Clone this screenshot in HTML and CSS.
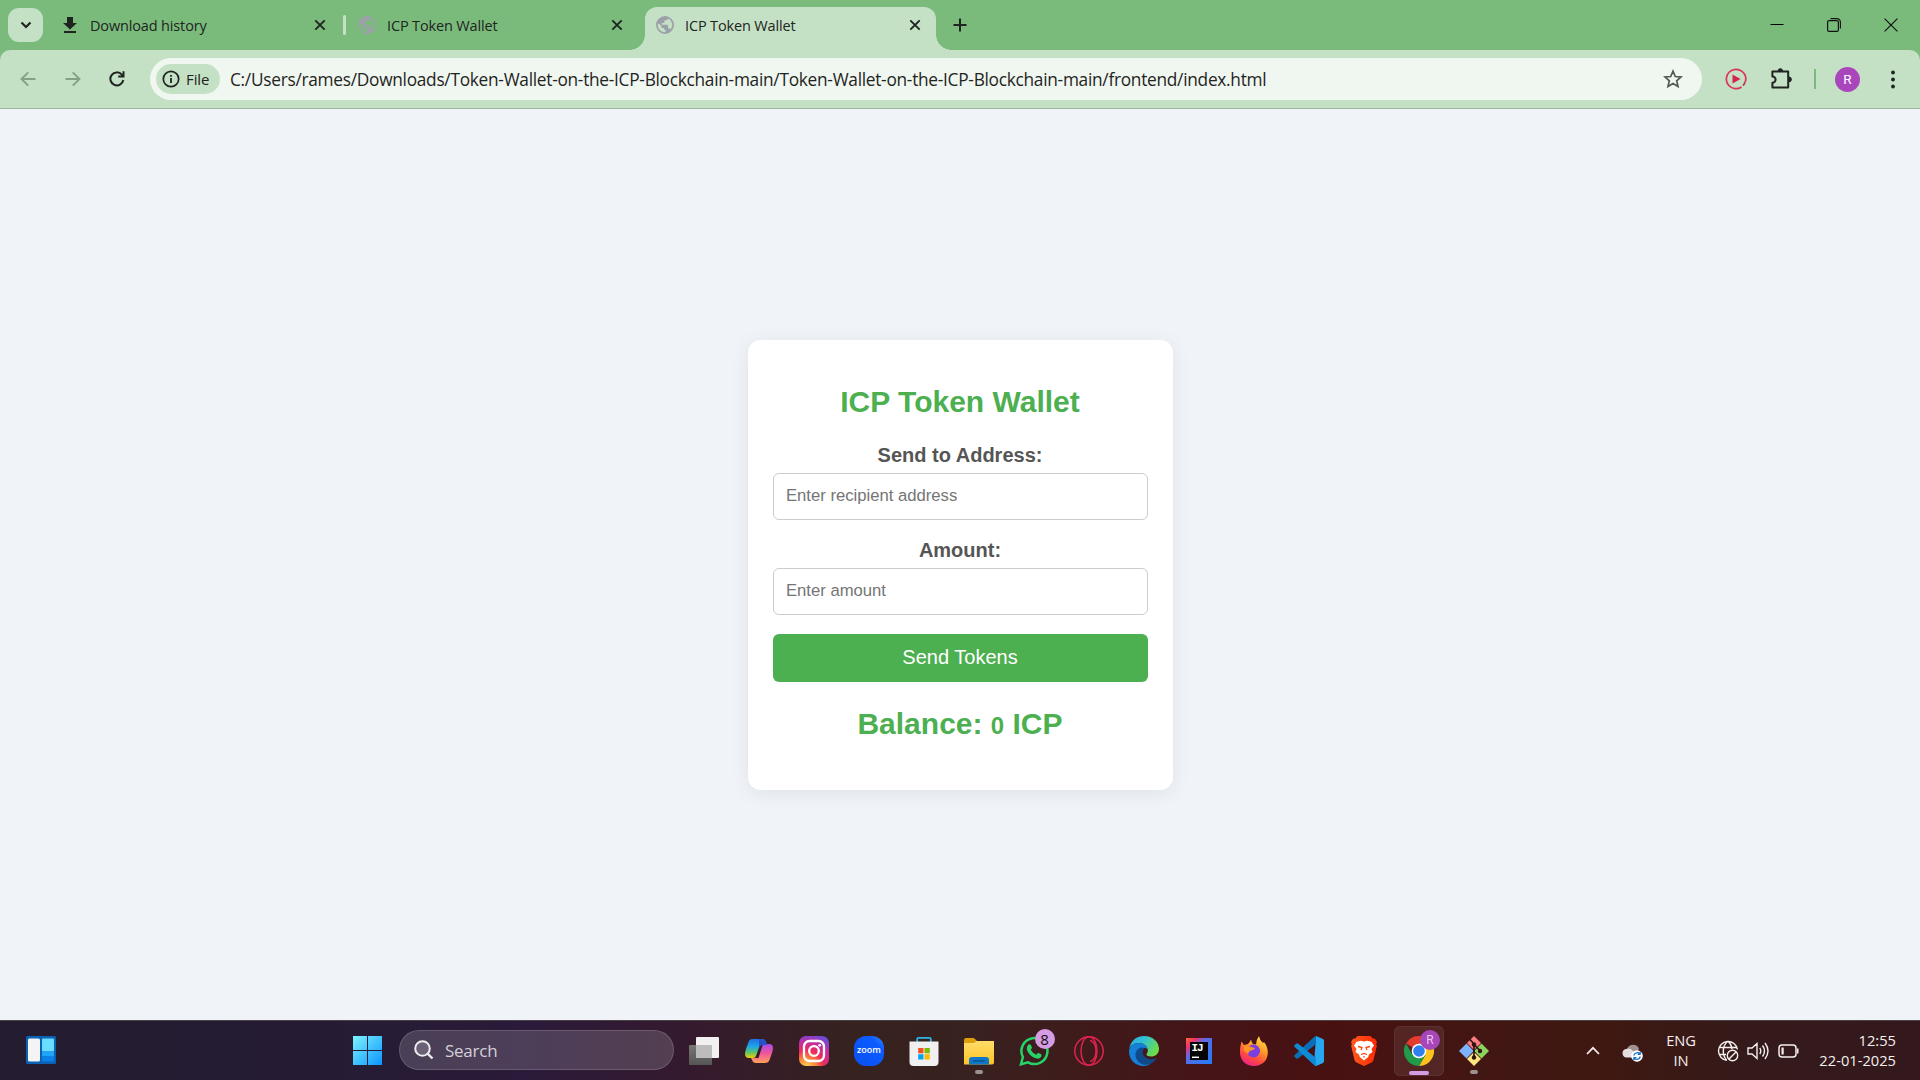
FILE: index.html
```html
<!DOCTYPE html>
<html lang="en">
<head>
<meta charset="utf-8">
<title>ICP Token Wallet</title>
<link rel="stylesheet" href="styles.css">
</head>
<body>
<svg class="defs" aria-hidden="true">
  <defs>
    <symbol id="close" viewBox="0 0 12 12"><path d="M1.3 1.3 10.7 10.7M10.7 1.3 1.3 10.7" fill="none" stroke="#1f2421" stroke-width="1.900"/></symbol>
    <symbol id="globe" viewBox="0 0 20 20"><path d="M10 1a9 9 0 1 0 0 18 9 9 0 0 0 0-18zM8.8 17.2A7.3 7.3 0 0 1 2.9 8.400L6.400 10.400v1q0 1.500 1.500 1.500h1v1.500h1.600v2.800zM15.600 14.600q-.5-1.300-1.800-1.300h-.8v-2.600q0-.9-.9-.9H6.800V8h1.800q.9 0 .9-.9V5.300h1.800q1.700 0 1.700-1.700v-.3A7.300 7.300 0 0 1 15.600 14.600z" fill="#9ba0a9" fill-rule="evenodd"/></symbol>
    <linearGradient id="gWin" x1="0" y1="0" x2="1" y2="1"><stop offset="0" stop-color="#7df4ff"/><stop offset="1" stop-color="#0a94ff"/></linearGradient>
    <linearGradient id="gGray" x1="0" y1="0" x2="0" y2="1"><stop offset="0" stop-color="#777"/><stop offset="1" stop-color="#555"/></linearGradient>
    <linearGradient id="gCopL" x1="0" y1="0" x2="0" y2="1"><stop offset="0" stop-color="#1f6fe0"/><stop offset=".4" stop-color="#1fa6e6"/><stop offset=".7" stop-color="#5cc46a"/><stop offset="1" stop-color="#f0d000"/></linearGradient>
    <linearGradient id="gCopR" x1="0" y1="0" x2="0" y2="1"><stop offset="0" stop-color="#a94bea"/><stop offset=".5" stop-color="#f0569a"/><stop offset="1" stop-color="#ffa05a"/></linearGradient>
    <radialGradient id="gInsta" cx=".25" cy="1.05" r="1.15"><stop offset="0" stop-color="#ffd75e"/><stop offset=".25" stop-color="#fb9238"/><stop offset=".5" stop-color="#ee2a5b"/><stop offset=".75" stop-color="#c22fa4"/><stop offset="1" stop-color="#6a4bd8"/></radialGradient>
    <linearGradient id="gFold" x1="0" y1="0" x2="0" y2="1"><stop offset="0" stop-color="#ffdc6b"/><stop offset="1" stop-color="#ffc425"/></linearGradient>
    <linearGradient id="gEdge" x1="0" y1="0" x2="1" y2=".5"><stop offset="0" stop-color="#2aa7e0"/><stop offset=".5" stop-color="#33c3d0"/><stop offset="1" stop-color="#6bdc4a"/></linearGradient>
    <linearGradient id="gIj" x1="0" y1="0" x2="1" y2="1"><stop offset="0" stop-color="#ff6a2a"/><stop offset=".2" stop-color="#f0326e"/><stop offset=".4" stop-color="#5a6be8"/><stop offset="1" stop-color="#1f7cf5"/></linearGradient>
    <linearGradient id="gFox" x1=".8" y1="0" x2=".3" y2="1"><stop offset="0" stop-color="#ffe34d"/><stop offset=".4" stop-color="#ff9a28"/><stop offset=".75" stop-color="#ff4545"/><stop offset="1" stop-color="#e8238a"/></linearGradient>
    <linearGradient id="gBrave" x1="0" y1="0" x2="1" y2="0"><stop offset="0" stop-color="#ff5a1f"/><stop offset="1" stop-color="#ff2800"/></linearGradient>
  </defs>
</svg>

<header class="tabstrip">
  <button class="tab-search"><svg width="12" height="8" viewBox="0 0 12 8"><path d="M1.500 1.500 6 6 10.500 1.500" fill="none" stroke="#1f2421" stroke-width="2.200"/></svg></button>
  <div class="tab tab-first">
    <svg class="fav" viewBox="0 0 20 20"><path d="M7 2h6v6h4l-7 6.500L3 8h4zM4 16h12v2H4z" fill="#1f2421"/></svg>
    <span class="tab-title">Download history</span>
    <svg class="x"><use href="#close"/></svg>
  </div>
  <i class="tab-sep"></i>
  <div class="tab tab-mid">
    <svg class="fav"><use href="#globe"/></svg>
    <span class="tab-title">ICP Token Wallet</span>
    <svg class="x"><use href="#close"/></svg>
  </div>
  <div class="tab tab-active">
    <svg class="fav"><use href="#globe"/></svg>
    <span class="tab-title">ICP Token Wallet</span>
    <svg class="x"><use href="#close"/></svg>
  </div>
  <svg class="plus" viewBox="0 0 14 14"><path d="M7 .5v13M.5 7h13" stroke="#1f2421" stroke-width="2"/></svg>
  <div class="win-controls">
    <svg width="14" height="14" viewBox="0 0 14 14"><path d="M.5 6.500h13" stroke="#000" stroke-width="1"/></svg>
    <svg width="14" height="14" viewBox="0 0 14 14"><path d="M3.500.6H10a3.400 3.400 0 0 1 3.400 3.400v6.500" fill="none" stroke="#111" stroke-width="1.100"/><rect x=".6" y="2.600" width="10.800" height="10.800" rx="1.500" fill="none" stroke="#111" stroke-width="1.200"/></svg>
    <svg width="14" height="14" viewBox="0 0 14 14"><path d="M.6.6 13.400 13.400M13.400.6.6 13.400" stroke="#111" stroke-width="1.200"/></svg>
  </div>
</header>

<div class="toolbar">
  <svg class="nav back" viewBox="0 0 16 16"><path d="M15.500 8H1.500M8.200 1.300 1.500 8l6.700 6.700" fill="none" stroke="#84a086" stroke-width="1.900"/></svg>
  <svg class="nav fwd" viewBox="0 0 16 16"><path d="M.5 8h14M7.800 1.300 14.500 8l-6.700 6.700" fill="none" stroke="#84a086" stroke-width="1.900"/></svg>
  <svg class="nav reload" viewBox="0 0 16 16"><path d="M14.300 9A6.500 6.500 0 1 1 12.800 3.600L14.500 5.600" fill="none" stroke="#1f2421" stroke-width="2"/><path d="M15.500.2v6.300H9.200V4.600h4.300V.2z" fill="#1f2421"/></svg>
  <div class="omnibox">
    <div class="chip">
      <svg width="18" height="18" viewBox="0 0 18 18"><circle cx="9" cy="9" r="7.700" fill="none" stroke="#1f2421" stroke-width="1.700"/><path d="M9 8v5M9 5v1.800" stroke="#1f2421" stroke-width="1.800"/></svg>
      <span class="chip-text">File</span>
    </div>
    <span class="url">C:/Users/rames/Downloads/Token-Wallet-on-the-ICP-Blockchain-main/Token-Wallet-on-the-ICP-Blockchain-main/frontend/index.html</span>
    <svg class="star" viewBox="0 0 20 20"><path d="m10 2.200 2.300 5.300 5.700.5-4.300 3.800 1.300 5.600-5-3-5 3 1.300-5.600L2 8l5.700-.5z" fill="none" stroke="#4f5a51" stroke-width="1.700"/></svg>
  </div>
  <svg class="ext-play" viewBox="0 0 22 22"><path d="M20 14.500A9.700 9.700 0 0 0 17 3.400 9.700 9.700 0 1 0 16.500 19" fill="none" stroke="#dc3558" stroke-width="1.700"/><path d="M18.200 17.600 20 14.500" stroke="#b02a48" stroke-width="1.600"/><path d="M7.500 6.500v9L15.500 11z" fill="#d32450"/></svg>
  <svg class="ext" viewBox="0 0 22 22"><path d="M2.400 3.600H18.200V19.600H2.400V14.800a3.200 3.200 0 0 0 0-6.400z" fill="none" stroke="#1f2421" stroke-width="2" stroke-linejoin="round"/><path d="M8 3a2.300 2.300 0 0 1 4.600 0zM19 9a2.400 2.400 0 0 1 0 4.800z" fill="#1f2421" stroke="#1f2421"/></svg>
  <i class="tool-sep"></i>
  <span class="avatar">R</span>
  <svg class="menu" viewBox="0 0 4 20"><g fill="#1f2421"><circle cx="2" cy="3.500" r="1.900"/><circle cx="2" cy="10.500" r="1.900"/><circle cx="2" cy="17.500" r="1.900"/></g></svg>
</div>

<main class="page">
  <section class="wallet">
    <h1>ICP Token Wallet</h1>
    <label for="address">Send to Address:</label>
    <input id="address" type="text" placeholder="Enter recipient address">
    <label for="amount">Amount:</label>
    <input id="amount" type="text" placeholder="Enter amount">
    <button class="send">Send Tokens</button>
    <h2>Balance: <span class="balance">0</span> ICP</h2>
  </section>
</main>

<footer class="taskbar">
  <svg class="widgets" viewBox="0 0 30 28"><rect width="30" height="28" rx="1.500" fill="#0b62b4"/><rect x="2" y="2.500" width="12" height="23" rx="1.500" fill="#f4f4f4"/><rect x="16" y="2.500" width="12" height="13" rx="1" fill="#6adcff"/><path d="M16 15.500h12v5H16z" fill="#1fa4f8"/><path d="M16 20.500h12v4a1 1 0 0 1-1 1H17a1 1 0 0 1-1-1z" fill="#0a80ea"/></svg>

  <div class="slot start"><svg width="29" height="29" viewBox="0 0 29 29"><path d="M0 0h14v14H0zM15 0h14v14H15zM0 15h14v14H0zM15 15h14v14H15z" fill="url(#gWin)"/></svg></div>
  <div class="search"><svg width="20" height="20" viewBox="0 0 20 20"><circle cx="8.500" cy="8.500" r="7.300" fill="#6c6077" stroke="#eee" stroke-width="2"/><path d="m13.500 13.500 5 5" stroke="#eee" stroke-width="2.400"/></svg><span>Search</span></div>

  <div class="slot"><svg width="30" height="30" viewBox="0 0 30 30"><rect y="9" width="23" height="20" rx="1" fill="url(#gGray)"/><rect x="7" y="1" width="23" height="21" rx="1" fill="#f0f0f0"/><path d="M7 9h15q1 0 1 1v12H8q-1 0-1-1z" fill="#bcbcbc"/></svg></div>
  <div class="slot"><svg width="30" height="30" viewBox="0 0 30 30"><path d="M8 3h10q3 0 4 3l1 3h-4q-3 0-4 3l-2.500 7q-1 3-4 3H5q-4 0-4-4 0-2 1-5l2.500-7Q5.500 3 8 3z" fill="url(#gCopL)"/><path d="M21 8h4q4 0 4 4 0 2-1 5l-2.500 7q-1 3-4.500 3h-9q-3 0-4-3l-1-2h3q3 0 4-3l2.500-7Q17.500 8 21 8z" fill="url(#gCopR)"/><path d="m16.500 8-5 14h3l4.500-14z" fill="#351c2c"/><path d="M15 3h3q3 0 4 3l1 3h-4q-3 0-4 3z" fill="#2653c7"/></svg></div>
  <div class="slot"><svg width="30" height="30" viewBox="0 0 30 30"><rect width="30" height="30" rx="7" fill="url(#gInsta)"/><g fill="none" stroke="#fff" stroke-width="2.300"><rect x="5" y="5" width="20" height="20" rx="5.500"/><circle cx="15" cy="15" r="4.800"/></g><circle cx="20.700" cy="9.300" r="1.400" fill="#fff"/></svg></div>
  <div class="slot"><span class="zoom-icon">zoom</span></div>
  <div class="slot"><svg width="30" height="30" viewBox="0 0 30 30"><path d="M8.200 6.500V3q0-1.200 1.200-1.200h11.200q1.200 0 1.200 1.200v3.500" fill="none" stroke="#2cb5e6" stroke-width="1.800"/><path d="M.5 5.500h29V26q0 4-4 4h-21q-4 0-4-4z" fill="#f0f0f0"/><path d="M9.200 12h5.300v5.300H9.200z" fill="#f25022"/><path d="M15.500 12h5.300v5.300h-5.300z" fill="#7fba00"/><path d="M9.200 18.200h5.300v5.300H9.200z" fill="#00a4ef"/><path d="M15.500 18.200h5.300v5.300h-5.300z" fill="#ffb900"/></svg></div>
  <div class="slot"><svg width="30" height="30" viewBox="0 0 30 30"><path d="M0 4q0-2 2-2h7q1 0 2 1l2 2v5H0z" fill="#dd9f0b"/><path d="M0 7h9q1 0 2-.7L12.500 5H30v21.500q0 2-2 2H0z" fill="url(#gFold)"/><path d="M5 28.500V24q0-3 3-3h14q3 0 3 3v4.500z" fill="#0f78c8"/><path d="M9 25h12" stroke="#0a4d8c" stroke-width="1.300"/></svg><i class="dot"></i></div>
  <div class="slot"><svg width="30" height="30" viewBox="0 0 30 30"><path d="M2 28.300 3.900 21A13 13 0 1 1 9 26.300z" fill="none" stroke="#25d366" stroke-width="2.500"/><path d="M9.500 8.500q1.700-1 2.500.8l.9 2q.3.900-1.200 2.500 1.900 3.600 5.500 4.900 1.500-2.100 2.300-1.700l2.600 1.300q1 .6.200 2.200-1.400 2.600-4.300 2.100-6.200-1.200-9.700-7.700-1.400-3.800 1.200-6.400z" fill="#25d366"/></svg><span class="badge">8</span></div>
  <div class="slot"><svg width="30" height="30" viewBox="0 0 30 30"><g fill="none" stroke="#e0224e" stroke-width="1.500"><circle cx="15" cy="15" r="14.200"/><ellipse cx="15" cy="15" rx="8" ry="14.200"/><path d="M16 4.500c8 1 8 20 0 21"/></g></svg></div>
  <div class="slot"><svg width="30" height="30" viewBox="0 0 30 30"><path d="M0 14.500C1 5 7 0 15 0c9 0 15 6 15 13 0 5-4 7.500-8 7.500-3 0-4.500-1-4.500-2s1.300-1.600 1.300-4C18.800 10.500 15 7 9.500 7 4 7 0 11 0 14.500z" fill="url(#gEdge)"/><path d="M0 15C.5 10 4.500 7 9.500 7c5 0 8.500 3 9 6.300-1-1-2-1.300-3-1.300-3 0-4.500 3-4.500 6 0 6 5 10.500 11 9.500-2.200 1.700-5 2.500-7.500 2.500C6 30 0 23.500 0 15z" fill="#1580d8"/><path d="M12 11.500c-5 1.500-7 7-4.500 11.500C10 28 16 30 21 28c3-1.200 6-4 6.700-6-3 1.500-6.700 1.700-9.700.3C13.500 20 12.500 16 15.500 12q-1.500-.8-3.500-.5z" fill="#114a8b"/></svg></div>
  <div class="slot"><svg width="26" height="26" viewBox="0 0 26 26"><path d="M0 0h26v26H0z" fill="url(#gIj)"/><path d="M4 4h18v18H4z" fill="#050505"/><path d="M6 19.300h7" stroke="#fff" stroke-width="1.500"/><text class="ij" x="5.400" y="13">IJ</text></svg></div>
  <div class="slot"><svg width="30" height="30" viewBox="0 0 30 30"><path d="M2.500 5.500 5 9l4-1q2-2 3-4.500Q12.500 6 14 8l3 .5Q17 4 20 0q.5 4 4 7l1-1q4 5 3.800 11C28.500 25 22.500 30 15 30 6.500 30 .5 24 1 15 1 11 2 8 2.500 5.500z" fill="url(#gFox)"/><circle cx="14.500" cy="15" r="6.500" fill="#7b3fe0"/><path d="M5 10q4-1 7 1l4 1q-1 2-4 2.500-3 1-2.500 3.500L5 15z" fill="#ff9422"/></svg></div>
  <div class="slot"><svg width="30" height="30" viewBox="0 0 30 30"><path d="m22 0 7 3q1 .5 1 2v20q0 1.500-1 2l-7 3-2-1z" fill="#27a6f2"/><path d="M22 0v8L4 22.500q-.7.500-1.500 0L.5 20.800q-.9-.8 0-1.600L20 1z" fill="#0b6fb8"/><path d="M22 30v-8L4 7.500q-.7-.5-1.500 0L.5 9.200q-.9.800 0 1.600L20 29z" fill="#118ad6"/></svg></div>
  <div class="slot"><svg width="30" height="30" viewBox="0 0 30 30"><path d="M8.500 0h13L24 2.800l1.800-.3L28 6l-.8 2 .6 2-3.300 14q-.5 1.500-2 2.500L15 30l-7.500-3.500q-1.500-1-2-2.500L2.200 10l.6-2L2 6l2.200-3.500 1.800.3z" fill="url(#gBrave)"/><path d="m15 5.500 3-.7 4.500 1L25 9.500 22.500 13l1 3-3.500 2.500-.8 2.500L15 24.500 10.800 21l-.8-2.500L6.500 16l1-3L5 9.500l2.500-3.700 4.500-1z" fill="#fff"/><path d="m9 10.500 4 1-1 2.500M21 10.500l-4 1 1 2.500M12 18.500l3-1 3 1M15 20v1.500" fill="none" stroke="#ff4410" stroke-width="1.300"/></svg></div>
  <div class="slot"><div class="active-app"><svg width="30" height="30" viewBox="0 0 30 30"><path d="M15 15 2 7.500A15 15 0 0 1 28 7.500H15z" fill="#e33b2e"/><path d="M15 15V7.500h13A15 15 0 0 1 15 30l6.500-11.200z" fill="#fcc31e"/><path d="M15 15l6.500 3.800L15 30A15 15 0 0 1 2 7.500l6.500 11.300z" fill="#229a4a"/><circle cx="15" cy="15" r="7.300" fill="#fff"/><circle cx="15" cy="15" r="5.800" fill="#2f7fee"/></svg><span class="badge who">R</span><i class="bar"></i></div></div>
  <div class="slot"><svg width="30" height="30" viewBox="0 0 30 30"><path d="m15 0 7 7-7 7-7-7z" fill="#ff7c80"/><path d="m7.500 7.500 7.200 7.500-7.200 7.500L0 15z" fill="#80b3ff"/><path d="m22.500 7.500 7.500 7.500-7.500 7.500-7.200-7.500z" fill="#8bd35e"/><path d="m15 16 7 7-7 7-7-7z" fill="#ffe680"/><path d="M11 3.500 15 8v13M15 8.500l6 6" fill="none" stroke="#2f1512" stroke-width="1.700"/><g fill="#2f1512"><circle cx="15" cy="8.500" r="2.200"/><circle cx="21" cy="15" r="2.200"/><circle cx="15" cy="21.500" r="2.200"/></g></svg><i class="dot"></i></div>

  <div class="tray">
    <svg class="chev" viewBox="0 0 14 9"><path d="M1 8 7 1.800 13 8" fill="none" stroke="#f5efee" stroke-width="1.700"/></svg>
    <svg class="cloud" viewBox="0 0 22 18"><path d="M5 5Q7 .8 11 .8q4.500 0 6 4.200l-3 4z" fill="#a09090"/><path d="M4.500 13.500A4.300 4.300 0 0 1 4 5q4-1.500 7 2l5 6.500z" fill="#e4dedf"/><circle cx="15" cy="12" r="5.800" fill="#fff"/><path d="M11.800 11.500a3.500 3.500 0 0 1 6-1.700M18.300 12.500a3.500 3.500 0 0 1-6 1.700M18.200 7.800v2.500h-2.500M11.900 16.200v-2.500h2.500" fill="none" stroke="#1b74c9" stroke-width="1.300"/></svg>
    <div class="lang"><span>ENG</span><span>IN</span></div>
    <svg class="net" viewBox="0 0 22 22"><g fill="none" stroke="#f5efee" stroke-width="1.400"><path d="M20.400 9.500A9.500 9.500 0 1 0 10 20.400M10.800 1.300C5 6 5 15 9.500 20M11.200 1.300q3.500 3.500 3.800 8M2 7.500h18M2 14.500h7"/><circle cx="15.500" cy="15.500" r="5.200"/><path d="m12 19 7-7"/></g></svg>
    <svg class="vol" viewBox="0 0 22 20"><g fill="none" stroke="#f5efee" stroke-width="1.400"><path d="M1 7h4l5-4.500v15L5 13H1zM12.800 7q2 3 0 6M15.500 4.500q4 5.500 0 11M18 2q6 8 0 16"/></g></svg>
    <svg class="bat" viewBox="0 0 22 14"><rect x="1" y="1" width="17" height="12" rx="3" fill="none" stroke="#f5efee" stroke-width="1.500"/><path d="M3.500 3.500h2.200v7H3.500zM19 4.500h1.500v5H19z" fill="#f5efee"/></svg>
    <div class="clock"><span class="time">12:55</span><span class="date">22-01-2025</span></div>
  </div>
</footer>
</body>
</html>
```
FILE: styles.css
```css
* { box-sizing: border-box; }
body {
  margin: 0;
  width: 1920px;
  height: 1080px;
  overflow: hidden;
  display: flex;
  flex-direction: column;
  font-family: "Open Sans", "Noto Sans", sans-serif;
  color: #1f2421;
  background: #7abb7c;
}
svg, i { flex: none; display: block; }
button { border: 0; padding: 0; font: inherit; }
.defs { position: absolute; width: 0; height: 0; }

/* Tab strip */
.tabstrip { flex: none; height: 50px; display: flex; background: #7abb7c; }
.tab-search {
  width: 35px; height: 34px; margin: 8px 0 0 8px;
  border-radius: 11px; background: #c5e1c5;
  display: flex; align-items: center; justify-content: center;
}
.tab { display: flex; align-items: center; height: 42px; margin-top: 8px; padding-bottom: 8px; }
.fav { width: 20px; height: 20px; }
.x { width: 12px; height: 12px; margin-left: auto; }
.tab-title {
  margin-left: 10px; padding-top: 2px;
  font-size: 14.500px; line-height: 20px; letter-spacing: -.15px; white-space: nowrap;
}
.tab-first { width: 266px; margin-left: 17px; }
.tab-sep { width: 3px; height: 20px; margin: 15px 0 0 17px; border-radius: 2px; background: #c5e1c5; }
.tab-mid { width: 265px; margin-left: 11px; }
.tab-mid .x { margin-right: -1px; }
.tab-active {
  position: relative; width: 291px; height: 43px; margin: 7px 0 0 23px;
  padding: 1px 15px 8px 10px; border-radius: 12px 12px 0 0; background: #c5e1c5;
}
.tab-active::before, .tab-active::after {
  content: ""; position: absolute; bottom: 0; width: 15px; height: 15px;
}
.tab-active::before { left: -15px; background: radial-gradient(circle at 0 0, transparent 14.500px, #c5e1c5 15px); }
.tab-active::after { right: -15px; background: radial-gradient(circle at 100% 0, transparent 14.500px, #c5e1c5 15px); }
.plus { width: 14px; height: 14px; margin: 18px 0 0 17px; }
.win-controls { display: flex; gap: 43px; margin: 18px 22px 0 auto; }

/* Toolbar */
.toolbar {
  flex: none; height: 59px; display: flex; align-items: center;
  background: #c5e1c5; border-bottom: 1px solid #9ab69c;
  border-radius: 10px 10px 0 0;
}
.nav { width: 16px; height: 16px; }
.back { margin-left: 20px; }
.fwd { margin-left: 29px; }
.reload { margin-left: 28px; }
.omnibox {
  width: 1552px; height: 42px; margin-left: 25px; padding-left: 6px;
  display: flex; align-items: center; border-radius: 21px; background: #f0f7f1;
}
.chip {
  width: 64px; height: 30px; padding-left: 6px; border-radius: 15px; background: #c5e1c5;
  display: flex; align-items: center; gap: 6px;
}
.chip-text { font-size: 15px; line-height: 20px; font-weight: 500; letter-spacing: -.1px; }
.url { margin-left: 10px; padding-top: 1px; font-size: 17.300px; line-height: 24px; letter-spacing: -.275px; white-space: nowrap; }
.star { width: 20px; height: 20px; margin: 0 19px 0 auto; }
.ext-play { width: 22px; height: 22px; margin-left: 23px; }
.ext { width: 22px; height: 22px; margin-left: 23px; }
.tool-sep { width: 2px; height: 20px; margin-left: 22px; background: #7abb7c; }
.avatar {
  width: 25px; height: 25px; margin-left: 19px; border-radius: 50%;
  background: #aa46bb; color: #fff; font: 13.500px/25px Roboto, sans-serif; text-align: center;
}
.menu { width: 4px; height: 20px; margin-left: 31px; }

/* Wallet page */
.page {
  flex: 1; display: flex; align-items: center; justify-content: center;
  background: #f0f3f8; font-family: "Liberation Sans", Arial, sans-serif;
}
.wallet {
  width: 425px; height: 450px; padding: 25px; border-radius: 12.500px; background: #fff;
  box-shadow: 0 3px 19px rgba(0, 0, 0, .075); text-align: center;
  display: flex; flex-direction: column;
}
h1, h2 { margin: 0; font-size: 30px; line-height: 36px; color: #4caf50; font-weight: bold; }
h1 { margin-top: 19px; margin-bottom: 23px; }
label { font-size: 20px; line-height: 24px; font-weight: bold; color: #555; margin-bottom: 6px; }
input {
  flex: none; width: 375px; height: 47px; padding: 0 12.500px 1px; margin-bottom: 18px;
  border: 1px solid #ccc; border-radius: 6px; background: #fff; font: 16.667px "Liberation Sans", Arial, sans-serif;
}
input::placeholder { color: #757575; }
.send {
  flex: none; height: 48px; margin-top: 1px; padding-bottom: 1px; border-radius: 6px;
  background: #4caf50; color: #fff; font-size: 20px; line-height: 24px;
}
h2 { margin-top: 24px; }
.balance { font-size: 24px; }

/* Taskbar */
.taskbar {
  flex: none; height: 60px; display: flex; align-items: flex-start;
  border-top: 1px solid #4a4145; color: #f5efee;
  background: linear-gradient(90deg, #241c30 0, #251c34 330px, #2b1a3a 530px, #351a2e 690px, #36221f 850px, #38211f 980px, #3e1c1c 1060px, #451418 1200px, #481111 1330px, #421613 1480px, #3f1811 1600px, #341a1a 1750px, #33191d 1920px);
}
.widgets { width: 30px; height: 28px; margin: 15px 0 0 26px; }
.slot { flex: none; position: relative; width: 55px; height: 59px; display: flex; align-items: center; justify-content: center; }
.slot.start { margin-left: 283.500px; }
.search {
  width: 275px; height: 40px; margin: 9px 2.500px 0 4.500px; padding-left: 14px;
  border: 1px solid rgba(255, 255, 255, .15); border-radius: 20px;
  background: rgba(255, 255, 255, .16);
  display: flex; align-items: center; gap: 11px; font-size: 17px; color: #d5cfd9;
}
.search span { letter-spacing: -.25px; }
.zoom-icon {
  width: 30px; height: 30px; border-radius: 12px; background: linear-gradient(45deg, #0b4ff0, #0b5cff 75%, #3d8bff);
  color: #fff; font: 600 9px/28px "Open Sans", sans-serif; text-align: center;
}
.dot { position: absolute; left: 23px; top: 49px; width: 8px; height: 4px; border-radius: 2px; background: #9c9190; }
.badge {
  position: absolute; left: 28px; top: 8px; width: 20px; height: 20px; border-radius: 50%;
  background: #d59be3; color: #111; font-size: 15px; line-height: 20px; text-align: center;
}
.active-app {
  position: relative; width: 50px; height: 50px; border-radius: 6px;
  background: rgba(255, 255, 255, .08); border: 1px solid rgba(255, 255, 255, .06);
  display: flex; align-items: center; justify-content: center;
}
.who { left: 25px; top: 3px; background: #a746b8; color: #e8c8f0; font: 12px/20px Roboto, sans-serif; }
.bar { position: absolute; left: 14px; top: 44px; width: 20px; height: 4px; border-radius: 2px; background: #d59be3; }
.ij { font: bold 11px "Liberation Mono", monospace; fill: #fff; letter-spacing: -1px; }
.tray { margin-left: auto; margin-right: 24px; display: flex; align-items: center; height: 59px; }
.chev { width: 14px; height: 9px; }
.cloud { width: 22px; height: 18px; margin: 4px 0 0 22px; }
.lang, .clock { display: flex; flex-direction: column; font-size: 14.700px; line-height: 20px; margin-top: -1px; }
.lang { width: 40px; margin-left: 17px; align-items: center; letter-spacing: -.2px; }
.net { width: 22px; height: 22px; margin-left: 16px; }
.vol { width: 22px; height: 20px; margin-left: 8px; }
.bat { width: 22px; height: 14px; margin-left: 9px; }
.clock { width: 96px; align-items: flex-end; white-space: nowrap; }
```
